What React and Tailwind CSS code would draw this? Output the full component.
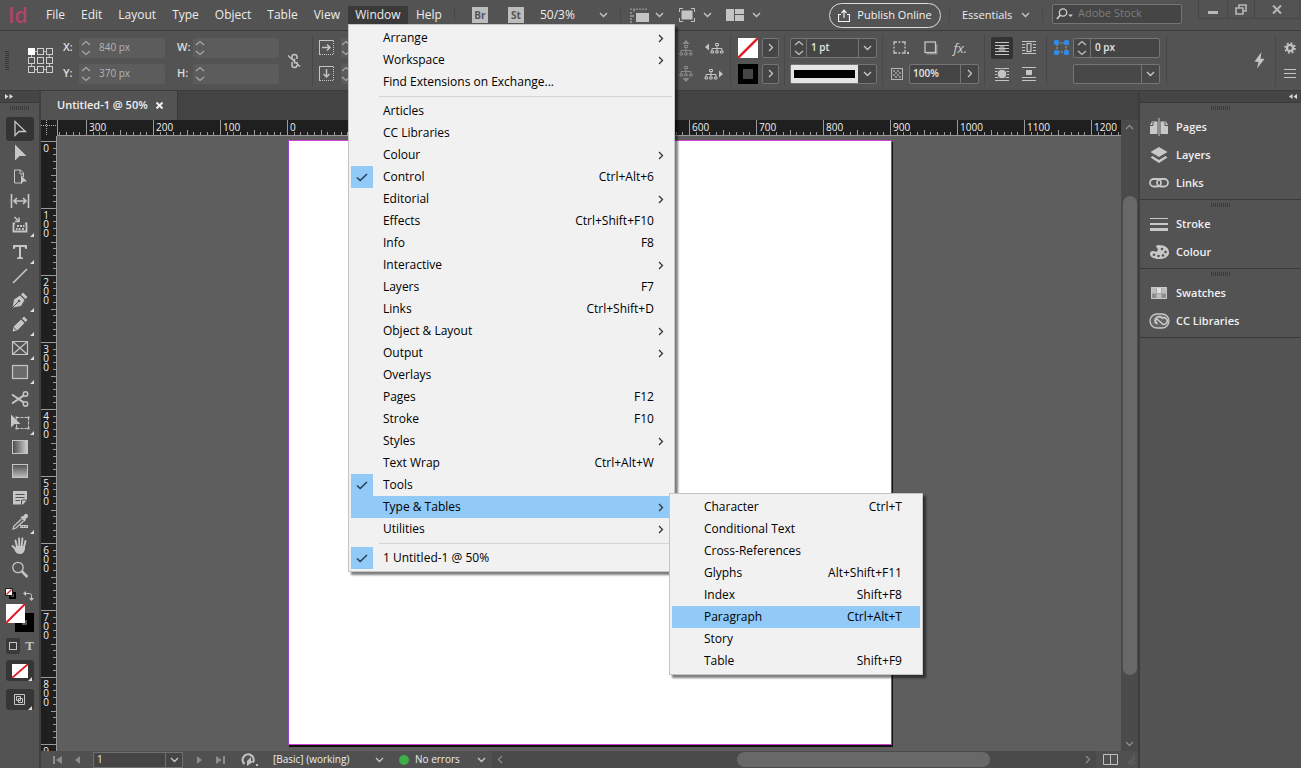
import React from "react";

const UI = "font-['Open_Sans','Noto_Sans',sans-serif]";

function Svg({ w, h, label, children, className = "" }) {
  return (
    <svg
      width={w}
      height={h}
      viewBox={`0 0 ${w} ${h}`}
      fill="none"
      stroke="currentColor"
      aria-hidden={label ? undefined : true}
      aria-label={label}
      className={`shrink-0 ${className}`}
    >
      {children}
    </svg>
  );
}

const Down = ({ className = "text-[#c8c8c8]" }) => (
  <Svg w={9} h={6} className={className}>
    <path d="M1 1l3.5 3.5L8 1" strokeWidth="1.3" />
  </Svg>
);
const Right = ({ className = "text-[#c8c8c8]" }) => (
  <Svg w={6} h={9} className={className}>
    <path d="M1 1l3.5 3.5L1 8" strokeWidth="1.3" />
  </Svg>
);
const Spin = ({ className = "text-[#a8a8a8]" }) => (
  <Svg w={10} h={16} className={className}>
    <path d="M1 5l4-3.5L9 5M1 11l4 3.500L9 11" strokeWidth="1.2" />
  </Svg>
);
const Divider = ({ className = "" }) => (
  <span className={`w-px shrink-0 self-stretch bg-[#484848] ${className}`} />
);
const Grip = ({ vertical = false }) =>
  vertical ? (
    <Svg w={4} h={20}>
      <path d="M2 0v20" stroke="#383838" strokeWidth="4" strokeDasharray="1 1" />
    </Svg>
  ) : (
    <Svg w={20} h={4}>
      <path d="M0 2h20" stroke="#3a3a3a" strokeWidth="4" strokeDasharray="1 1" />
    </Svg>
  );

/* ---------- menus ---------- */

const windowMenu = [
  { t: "Arrange", sub: true },
  { t: "Workspace", sub: true },
  { t: "Find Extensions on Exchange..." },
  null,
  { t: "Articles" },
  { t: "CC Libraries" },
  { t: "Colour", sub: true },
  { t: "Control", k: "Ctrl+Alt+6", on: true },
  { t: "Editorial", sub: true },
  { t: "Effects", k: "Ctrl+Shift+F10" },
  { t: "Info", k: "F8" },
  { t: "Interactive", sub: true },
  { t: "Layers", k: "F7" },
  { t: "Links", k: "Ctrl+Shift+D" },
  { t: "Object & Layout", sub: true },
  { t: "Output", sub: true },
  { t: "Overlays" },
  { t: "Pages", k: "F12" },
  { t: "Stroke", k: "F10" },
  { t: "Styles", sub: true },
  { t: "Text Wrap", k: "Ctrl+Alt+W" },
  { t: "Tools", on: true },
  {
    t: "Type & Tables",
    sub: true,
    hot: true,
    items: [
      { t: "Character", k: "Ctrl+T" },
      { t: "Conditional Text" },
      { t: "Cross-References" },
      { t: "Glyphs", k: "Alt+Shift+F11" },
      { t: "Index", k: "Shift+F8" },
      { t: "Paragraph", k: "Ctrl+Alt+T", hot: true },
      { t: "Story" },
      { t: "Table", k: "Shift+F9" },
    ],
  },
  { t: "Utilities", sub: true },
  null,
  { t: "1 Untitled-1 @ 50%", on: true },
];

function Menu({ items, className }) {
  return (
    <div
      role="menu"
      className={`absolute z-20 border border-[#c4c4c4] bg-[#f1f1f1] p-[2px] text-[12px] text-black shadow-[3px_3px_2px_rgba(0,0,0,0.5)] ${className}`}
    >
      {items.map((it, i) =>
        it === null ? (
          <div key={i} role="separator" className="my-[3px] ml-7 h-px bg-[#d4d4d4]" />
        ) : (
          <div key={i} className="relative">
            <button
              role="menuitem"
              className={`flex h-[22px] w-full items-center text-left ${it.hot ? "bg-[#91c9f7]" : ""}`}
            >
              <span
                className={`mr-[10px] flex h-[22px] w-[22px] items-center justify-center ${it.on ? "bg-[#91c9f7]" : ""}`}
              >
                {it.on && (
                  <Svg w={12} h={9} className="text-[#223a52]">
                    <path d="M1 4.500l3.200 3L11 1" strokeWidth="1.4" />
                  </Svg>
                )}
              </span>
              <span className="flex-1">{it.t}</span>
              {it.k && <span className="mr-[18px]">{it.k}</span>}
              {it.sub && <Right className="mr-[8px] text-[#333]" />}
            </button>
            {it.items && <Menu items={it.items} className="-top-[3px] left-full -ml-[3px] w-[254px]" />}
          </div>
        )
      )}
    </div>
  );
}

function MenuBar() {
  const left = ["File", "Edit", "Layout", "Type", "Object", "Table", "View"];
  return (
    <header className="flex h-[30px] shrink-0 items-center text-[12px] text-[#ececec]">
      <span className="w-[38px] shrink-0 pl-2 text-[21px] leading-none font-semibold text-[#b5446d]">Id</span>
      <nav className="flex shrink-0 items-center">
        {left.map((t) => (
          <button key={t} className="h-[18px] px-2 leading-[18px]">
            {t}
          </button>
        ))}
        <div className="relative">
          <button className="mt-[6px] mb-[6px] block h-[18px] w-[60px] bg-[#3a3a3a] text-center leading-[18px]">
            Window
          </button>
          <Menu items={windowMenu} className="top-[24px] left-0 w-[327px]" />
        </div>
        <button className="h-[18px] px-2 leading-[18px]">Help</button>
      </nav>
      <Divider className="mr-[17px] ml-1 my-2" />
      <button className="h-4 w-4 shrink-0 bg-[#bdbdbd] text-[10px] leading-4 font-bold text-[#555]">Br</button>
      <button className="ml-5 h-4 w-4 shrink-0 bg-[#bdbdbd] text-[10px] leading-4 font-bold text-[#555]">St</button>
      <button className="ml-4 flex w-[68px] shrink-0 items-center justify-between">
        50/3% <Down />
      </button>
      <Divider className="ml-3 mr-[9px] my-2" />
      <button aria-label="View options" className="flex shrink-0 items-center gap-[6px] text-[#c4c4c4]">
        <Svg w={19} h={15}>
          <path d="M1 .500v1.500M4 .500v3M7 .500v1.500M10 .500v1.500M13 .500v1.500M16 .500v1.500M0 5h2M0 8h4M0 11h2M0 14h2" />
          <rect x="6" y="5" width="13" height="9" fill="currentColor" stroke="none" />
        </Svg>
        <Down />
      </button>
      <button aria-label="Screen mode" className="ml-[15px] flex shrink-0 items-center gap-2 text-[#c4c4c4]">
        <Svg w={16} h={14}>
          <path d="M.500 4V.500H4M12 .500h3.500V4M15.500 10v3.500H12M4 13.500H.500V10" />
          <rect x="2.500" y="2.500" width="11" height="9" fill="currentColor" stroke="none" />
        </Svg>
        <Down />
      </button>
      <button aria-label="Arrange documents" className="ml-[14px] flex shrink-0 items-center gap-2 text-[#c4c4c4]">
        <Svg w={18} h={12}>
          <path d="M0 0h8v12H0zM9 0h9v5H9zM9 6h9v6H9z" fill="currentColor" stroke="none" />
        </Svg>
        <Down />
      </button>
      <span className="flex-1" />
      <button className="flex h-[25px] w-[112px] shrink-0 items-center justify-center gap-[7px] rounded-full border border-[#dcdcdc] text-[#f2f2f2]">
        <Svg w={12} h={13}>
          <path d="M3 5.500H.500v7h11v-7H9M6 9V1.500M3.500 4L6 1.200 8.500 4" strokeWidth="1.2" />
        </Svg>
        <span className="text-[11px] font-medium">Publish Online</span>
      </button>
      <Divider className="ml-2 mr-3 my-2" />
      <button className="flex w-[68px] shrink-0 items-center justify-between text-[11px]">
        Essentials <Down />
      </button>
      <Divider className="ml-3 mr-[9px] my-2" />
      <label className="mb-[3px] flex h-5 w-[130px] shrink-0 items-center gap-1 rounded-[2px] border border-[#757575] bg-[#454545] px-[3px]">
        <Svg w={18} h={12} className="text-[#cfcfcf]">
          <circle cx="7" cy="4.500" r="3.700" strokeWidth="1.3" />
          <path d="M4.300 7.200L.800 11" strokeWidth="1.7" />
          <path d="M12 6.500h5L14.500 9z" fill="currentColor" stroke="none" />
        </Svg>
        <input
          aria-label="Search Adobe Stock"
          placeholder="Adobe Stock"
          className="min-w-0 flex-1 bg-transparent text-[11px] outline-none placeholder:text-[#7d7d7d]"
        />
      </label>
      <div className="ml-4 mr-px flex h-[19px] shrink-0 self-start border-x border-b border-[#484848] text-[#b8b8b8]">
        <button aria-label="Minimise" className="flex w-7 items-end justify-center pb-1">
          <span className="h-[3px] w-[10px] bg-current" />
        </button>
        <button aria-label="Restore" className="flex w-7 items-center justify-center border-x border-[#484848]">
          <Svg w={12} h={11}>
            <path d="M4 4V1h7v6H8M1 4h7v6H1z" strokeWidth="1.6" />
          </Svg>
        </button>
        <button aria-label="Close" className="flex w-11 items-center justify-center">
          <Svg w={10} h={9}>
            <path d="M1 .500l8 8M9 .500l-8 8" strokeWidth="2" />
          </Svg>
        </button>
      </div>
    </header>
  );
}

/* ---------- control bar ---------- */

function SoftField({ label, value, id }) {
  return (
    <div className="flex h-5 items-center">
      <label htmlFor={id} className="w-4 text-[11px] font-semibold text-[#dedede]">
        {label}
      </label>
      <div className="flex h-5 w-[86px] items-center rounded-[2px] bg-[#5c5c5c] pl-[2px]">
        <Spin />
        <input
          id={id}
          defaultValue={value}
          className="ml-2 min-w-0 flex-1 bg-transparent text-[10px] text-[#b4b4b4] outline-none"
        />
      </div>
    </div>
  );
}

const Pair = ({ children, className = "" }) => (
  <div className={`grid shrink-0 grid-rows-[20px_20px] items-center gap-y-[6px] ${className}`}>{children}</div>
);

const IconBtn = ({ label, children, className = "" }) => (
  <button aria-label={label} className={`flex items-center justify-center text-[#c4c4c4] ${className}`}>
    {children}
  </button>
);

const Tree = ({ dir }) => (
  <Svg w={20} h={16} className={dir === "up" || dir === "down" ? "text-[#8b8b8b]" : ""}>
    {dir === "up" && <path d="M10 0l3.500 4h-7z" fill="currentColor" stroke="none" />}
    {dir === "down" && <path d="M10 16l3.500-4h-7z" fill="currentColor" stroke="none" />}
    {dir === "left" && <path d="M1 7l4-3.500v7z" fill="currentColor" stroke="none" />}
    {dir === "right" && <path d="M19 8l-4-3.500v7z" fill="currentColor" stroke="none" />}
    <g transform={dir === "up" ? "translate(3 4)" : dir === "down" ? "translate(3 -1)" : dir === "left" ? "translate(6 2)" : "translate(0 2)"}>
      <path d="M5.500 1.500h3v2h-3zM7 4v3M2 9V6.500h10V9M1 9h2.500v2H1zM5.700 9h2.500v2H5.700zM10.500 9H13v2h-2.500zM7 6v3" />
    </g>
  </Svg>
);

const Wrap = ({ kind }) => (
  <Svg w={16} h={14}>
    {kind === "none" && (
      <>
        <path d="M1 1.500h14M1 4.500h14M1 7.500h14M1 10.500h14M1 13.500h14" />
        <path d="M4.500 10.500a3.500 6.500 0 017 0z" fill="currentColor" fillOpacity="0.6" stroke="none" />
      </>
    )}
    {kind === "box" && (
      <>
        <path d="M1 .500h14M1 3.500h3M1 6.500h3M1 9.500h3M12 3.500h3M12 6.500h3M12 9.500h3M1 12.500h14" />
        <rect x="6" y="2.500" width="4" height="8" strokeWidth="1.200" />
      </>
    )}
    {kind === "shape" && (
      <>
        <path d="M1 1.500h14M1 4.500h14M1 7.500h14M1 10.500h14M1 13.500h14" />
        <circle cx="8" cy="7" r="4.800" fill="currentColor" stroke="#535353" />
      </>
    )}
    {kind === "jump" && (
      <>
        <path d="M1 .500h14M1 10.500h14M1 13.500h14" />
        <rect x="5" y="3" width="6" height="5" fill="currentColor" stroke="none" />
      </>
    )}
  </Svg>
);

function NoneSwatch({ className }) {
  return (
    <svg viewBox="0 0 20 20" preserveAspectRatio="none" aria-hidden="true" className={className}>
      <rect width="20" height="20" fill="#fff" />
      <path d="M0 20L20 0" stroke="#e01b24" strokeWidth="2.400" />
    </svg>
  );
}

const arrowBox =
  "flex items-center justify-center rounded-[2px] border border-[#757575] bg-[#454545]";

function ControlBar() {
  const cells = [];
  for (let r = 0; r < 3; r++)
    for (let c = 0; c < 3; c++)
      cells.push(
        <rect
          key={`${r}${c}`}
          x={0.5 + c * 9}
          y={0.5 + r * 9}
          width="6"
          height="6"
          fill={r + c === 0 ? "#fff" : "#535353"}
          stroke={r + c === 0 ? "#fff" : "#cfcfcf"}
        />
      );
  return (
    <section
      aria-label="Control"
      className="flex h-[61px] shrink-0 items-center border-y border-[#3c3c3c] text-[11px] text-[#e6e6e6]"
    >
      <span className="ml-[5px]">
        <Grip vertical />
      </span>
      <Svg w={26} h={25} className="ml-[19px]">
        <path d="M3.500 3.500h18v18h-18z" stroke="#bdbdbd" />
        {cells}
      </Svg>
      <Pair className="ml-[9px]">
        <SoftField id="x" label="X:" value="840 px" />
        <SoftField id="y" label="Y:" value="370 px" />
      </Pair>
      <Pair className="ml-[12px]">
        <SoftField id="w" label="W:" value="" />
        <SoftField id="h" label="H:" value="" />
      </Pair>
      <IconBtn label="Constrain proportions" className="ml-2 shrink-0">
        <Svg w={14} h={16}>
          <path d="M5 7V4a2.500 2.500 0 015 0v2M5 9v3a2.500 2.500 0 005 0v-3M7.500 5.500v5M1 2.500l12 11" strokeWidth="1.500" />
        </Svg>
      </IconBtn>
      <Divider className="ml-[11px] my-1" />
      <Pair className="ml-[6px]">
        <IconBtn label="Scale X">
          <Svg w={15} h={15}>
            <path d="M1 14.500h13.500V1" strokeDasharray="1 1" />
            <path d="M0 .500h14.500M.500 0v15" />
            <path d="M3 7.500h8M8 4.500l3 3-3 3" strokeWidth="1.500" />
          </Svg>
        </IconBtn>
        <IconBtn label="Scale Y">
          <Svg w={15} h={15}>
            <path d="M1 14.500h13.500V1" strokeDasharray="1 1" />
            <path d="M0 .500h14.500M.500 0v15" />
            <path d="M7.500 3v8M4.500 8l3 3 3-3" strokeWidth="1.500" />
          </Svg>
        </IconBtn>
      </Pair>
      <Pair className="ml-[7px] w-[86px] grid-cols-1">
        <div className="flex h-5 items-center rounded-[2px] bg-[#5c5c5c]">
          <Spin />
        </div>
        <div className="flex h-5 items-center rounded-[2px] bg-[#5c5c5c]">
          <Spin />
        </div>
      </Pair>
      <Divider className="ml-[247px] my-1" />
      <Pair className="ml-px grid-cols-[20px_20px] gap-x-[8px]">
        <IconBtn label="Select container">
          <Tree dir="up" />
        </IconBtn>
        <IconBtn label="Previous object">
          <Tree dir="left" />
        </IconBtn>
        <IconBtn label="Select content">
          <Tree dir="down" />
        </IconBtn>
        <IconBtn label="Next object">
          <Tree dir="right" />
        </IconBtn>
      </Pair>
      <Divider className="ml-[6px] my-1" />
      <Pair className="ml-[7px] grid-cols-[20px_17px] gap-x-1">
        <IconBtn label="Fill">
          <NoneSwatch className="h-5 w-5" />
        </IconBtn>
        <IconBtn label="Fill options" className={`${arrowBox} h-5`}>
          <Right />
        </IconBtn>
        <IconBtn label="Stroke" className="h-5 border-[5px] border-black bg-[#454545]" />
        <IconBtn label="Stroke options" className={`${arrowBox} h-5`}>
          <Right />
        </IconBtn>
      </Pair>
      <Divider className="ml-[5px] my-1" />
      <Pair className="ml-[5px] w-[87px] grid-cols-1">
        <div className="flex h-5 items-stretch rounded-[2px] border border-[#757575] bg-[#454545]">
          <span className="flex w-4 shrink-0 items-center justify-center border-r border-[#757575]">
            <Spin className="text-[#c4c4c4]" />
          </span>
          <input
            aria-label="Stroke weight"
            defaultValue="1 pt"
            className="min-w-0 flex-1 bg-transparent pl-1 text-[10px] font-semibold outline-none"
          />
          <button aria-label="Weights" className="flex w-[18px] shrink-0 items-center justify-center border-l border-[#757575]">
            <Down />
          </button>
        </div>
        <button
          aria-label="Stroke type"
          className="flex h-5 items-stretch rounded-[2px] border border-[#757575] bg-[#454545]"
        >
          <span className="flex flex-1 items-center bg-[#e4e4e4] px-[3px]">
            <span className="h-2 flex-1 bg-black" />
          </span>
          <span className="flex w-[18px] shrink-0 items-center justify-center">
            <Down />
          </span>
        </button>
      </Pair>
      <Divider className="ml-[5px] my-1" />
      <Pair className="ml-2 w-[88px] grid-cols-1">
        <div className="flex items-center justify-between pl-[2px] pr-3">
          <IconBtn label="Corner options">
            <Svg w={16} h={14}>
              <path d="M1 4V1h3M5.500 1h2M9 1h3v3M12 5.500v2M12 9v3H9M7.500 12h-2M4 12H1V9M1 7.500v-2" strokeWidth="1.300" />
              <rect x="14" y="11" width="2" height="2" fill="currentColor" stroke="none" />
            </Svg>
          </IconBtn>
          <IconBtn label="Drop shadow">
            <Svg w={14} h={14}>
              <path d="M2.500 12.500h10v-9" stroke="#8c8c8c" strokeWidth="2" />
              <rect x="1" y="1" width="10.500" height="10.500" fill="#535353" strokeWidth="1.300" />
            </Svg>
          </IconBtn>
          <button className="text-[13px] leading-5 font-medium text-[#cfcfcf] italic">fx.</button>
        </div>
        <div className="flex items-center justify-between">
          <Svg w={12} h={12} className="text-[#b4b4b4]">
            <rect x=".500" y=".500" width="11" height="11" />
            <path d="M2 2h2v2H2zM6 2h2v2H6zM4 4h2v2H4zM8 4h2v2H8zM2 6h2v2H2zM6 6h2v2H6zM4 8h2v2H4zM8 8h2v2H8z" fill="#8e8e8e" stroke="none" />
          </Svg>
          <div className="flex h-5 w-[70px] rounded-[2px] border border-[#757575] bg-[#454545]">
            <input
              aria-label="Opacity"
              defaultValue="100%"
              className="min-w-0 flex-1 bg-transparent pl-[3px] text-[10px] font-semibold outline-none"
            />
            <button aria-label="Opacity slider" className="flex w-[18px] shrink-0 items-center justify-center border-l border-[#757575]">
              <Right />
            </button>
          </div>
        </div>
      </Pair>
      <Divider className="ml-[5px] my-1" />
      <Pair className="ml-[6px] grid-cols-[22px_22px] gap-x-[5px]">
        <IconBtn label="No text wrap" className="h-[22px] rounded-[2px] bg-[#333]">
          <Wrap kind="none" />
        </IconBtn>
        <IconBtn label="Wrap around bounding box">
          <Wrap kind="box" />
        </IconBtn>
        <IconBtn label="Wrap around object shape">
          <Wrap kind="shape" />
        </IconBtn>
        <IconBtn label="Jump object">
          <Wrap kind="jump" />
        </IconBtn>
      </Pair>
      <Divider className="ml-[6px] my-1" />
      <Pair className="ml-[7px] grid-cols-[15px_87px] gap-x-[4px]">
        <Svg w={15} h={15}>
          <path d="M3 3h9v9H3z" stroke="#a0a0a0" strokeDasharray="2 1" />
          <g fill="#2f8ceb" stroke="none">
            <rect width="5" height="5" rx="1.500" />
            <rect x="10" width="5" height="5" rx="1.500" />
            <rect y="10" width="5" height="5" rx="1.500" />
            <rect x="10" y="10" width="5" height="5" rx="1.500" />
          </g>
        </Svg>
        <div className="flex h-5 rounded-[2px] border border-[#757575] bg-[#454545]">
          <span className="flex w-[17px] shrink-0 items-center justify-center border-r border-[#757575]">
            <Spin className="text-[#c4c4c4]" />
          </span>
          <input
            aria-label="Corner size"
            defaultValue="0 px"
            className="min-w-0 flex-1 bg-transparent pl-1 text-[10px] font-semibold outline-none"
          />
        </div>
        <span />
        <button
          aria-label="Corner shape"
          className="flex h-5 justify-end rounded-[2px] border border-[#757575] bg-[#484848]"
        >
          <span className="flex h-full w-[18px] items-center justify-center border-l border-[#757575]">
            <Down />
          </span>
        </button>
      </Pair>
      <Divider className="ml-[6px] my-1" />
      <span className="flex-1" />
      <IconBtn label="Quick apply" className="shrink-0">
        <Svg w={11} h={17}>
          <path d="M7.500 0L.500 9.500l4 .500L3 16.500 10.500 7l-4-.500z" fill="currentColor" stroke="none" />
        </Svg>
      </IconBtn>
      <Divider className="ml-[10px] my-1" />
      <Pair className="mr-[5px] ml-2">
        <IconBtn label="Settings">
          <Svg w={12} h={12}>
            <circle cx="6" cy="6" r="3" strokeWidth="2.200" />
            <circle cx="6" cy="6" r="4.900" strokeWidth="1.800" strokeDasharray="1.920 1.920" />
          </Svg>
        </IconBtn>
        <IconBtn label="Panel menu">
          <Svg w={12} h={9}>
            <path d="M0 .500h12M0 4.500h12M0 8.500h12" />
          </Svg>
        </IconBtn>
      </Pair>
    </section>
  );
}

/* ---------- tools ---------- */

const fillC = { fill: "currentColor", stroke: "none" };

const toolGroups = [
  [
    { n: "Selection", on: true, d: <path d="M5 2.500v14l4-4h6.500z" strokeWidth="1.300" /> },
    { n: "Direct selection", d: <path d="M5 1.500V17.500l4.500-4.500h7z" {...fillC} /> },
    {
      n: "Page",
      d: (
        <>
          <path d="M12 16H4.500V3h6l3 3v4M10 3v4h3.500" />
          <path d="M11 8v9l2.500-2.500H17z" {...fillC} />
        </>
      ),
    },
    { n: "Gap", d: <path d="M1.500 3v14M18.500 3v14M4 10h12M7 7l-3 3 3 3M13 7l3 3-3 3" strokeWidth="1.600" /> },
    {
      n: "Content collector",
      more: true,
      d: (
        <>
          <path d="M5 8.500H3.500v8h13v-8H15" strokeWidth="1.800" />
          <path d="M4.500 2l4 4M9 2.500v4H5" strokeWidth="1.500" />
          <path d="M7 10h2v2H7zM10 10h2v2h-2zM13 10h1.500v2H13zM6 13h1.500v2H6zM8.500 13h2v2h-2zM12 13h2v2h-2z" {...fillC} />
        </>
      ),
    },
  ],
  [
    { n: "Type", more: true, d: <path d="M3 3h14v4h-1.500l-1-2H11v10l2 .700V17H7v-1.300L9 15V5H5.500l-1 2H3z" {...fillC} /> },
    { n: "Line", d: <path d="M3 17L17 3" strokeWidth="1.600" /> },
    {
      n: "Pen",
      more: true,
      d: (
        <>
          <path d="M2.500 17.500l1.500-8L10 5.500l4.500 4.500-3.500 6z" {...fillC} />
          <path d="M11 4.700L13 2.500l4.500 4.500-2 2z" {...fillC} />
          <path d="M2.500 17.500l5.500-5.500" stroke="#535353" />
          <circle cx="9" cy="11" r="1.200" fill="#535353" stroke="none" />
        </>
      ),
    },
    {
      n: "Pencil",
      more: true,
      d: (
        <>
          <path d="M2.500 17.500l1.300-5L11 5.500l3.500 3.500-7 7.200zM12 4.500L14 2.500l3.500 3.500-2 2z" {...fillC} />
          <path d="M3.800 13.500l2.800 2.700" stroke="#535353" />
        </>
      ),
    },
    { n: "Rectangle frame", more: true, d: <path d="M2.500 3.500h15v13h-15zM2.500 3.500l15 13M17.500 3.500l-15 13" strokeWidth="1.200" /> },
    { n: "Rectangle", more: true, d: <rect x="2.500" y="3.500" width="15" height="13" fill="#6c6c6c" strokeWidth="1.200" /> },
  ],
  [
    {
      n: "Scissors",
      d: (
        <>
          <circle cx="15.500" cy="5" r="2.200" strokeWidth="1.500" />
          <circle cx="15.500" cy="15" r="2.200" strokeWidth="1.500" />
          <path d="M2 5.500l11.500 7.800M2 14.500l11.500-7.800" strokeWidth="2" />
        </>
      ),
    },
    {
      n: "Free transform",
      more: true,
      d: (
        <>
          <path d="M6.500 4.500h12v11h-12z" strokeDasharray="3 1" />
          <path d="M5.500 3.500h2v2h-2zM17.500 3.500h2v2h-2zM17.500 14.500h2v2h-2zM5.500 14.500h2v2h-2z" {...fillC} />
          <path d="M1 1.500v13L4.500 11h6z" {...fillC} />
        </>
      ),
    },
    { n: "Gradient swatch", d: <rect x="2.500" y="3.500" width="15" height="13" fill="url(#gradH)" /> },
    { n: "Gradient feather", d: <rect x="2.500" y="3.500" width="15" height="13" fill="url(#gradV)" /> },
  ],
  [
    {
      n: "Note",
      d: (
        <>
          <path d="M3 3h14v9l-4 4.500H3z" {...fillC} />
          <path d="M5.500 6.500h9M5.500 9.500h9M5.500 12.500h4.500M11.500 17v-5H17" stroke="#535353" />
        </>
      ),
    },
    {
      n: "Eyedropper",
      more: true,
      d: (
        <>
          <path d="M10.500 5.500l1.500-1.500 1 .500 1.500-2a2 2 0 013 3l-2 1.500.500 1-1.500 1.500z" {...fillC} />
          <path d="M11.500 7L4 14l-1 3 3-1 7.500-7" strokeWidth="1.300" />
          <path d="M10 14.500h8" strokeWidth="3" />
          <path d="M10.500 14.500h7" stroke="#535353" strokeDasharray="1 1.500" />
        </>
      ),
    },
    {
      n: "Hand",
      d: (
        <>
          <path d="M6 10h9v3q-1 5-5 5t-5.500-4z" {...fillC} />
          <path d="M7 11L5.500 4.500M9.300 10L9 2.500M11.700 10l.700-7.500M14 11l1.500-6M6 13.500L2.500 10" strokeWidth="1.900" strokeLinecap="round" />
        </>
      ),
    },
    {
      n: "Zoom",
      d: (
        <>
          <circle cx="8" cy="7.500" r="5.200" strokeWidth="1.300" />
          <path d="M12 11.500l5.500 5.500" strokeWidth="2.500" />
        </>
      ),
    },
  ],
];

const More = () => (
  <svg width="4" height="4" viewBox="0 0 4 4" aria-hidden="true" className="absolute right-[2px] bottom-0">
    <path d="M4 0v4H0z" fill="#dcdcdc" />
  </svg>
);

function Toolbar() {
  return (
    <aside aria-label="Tools" className="flex w-[41px] shrink-0 flex-col border-r-2 border-[#3f3f3f] text-[#c6c6c6]">
      <svg width="0" height="0" aria-hidden="true" className="absolute">
        <defs>
          <linearGradient id="gradH">
            <stop offset="0" stopColor="#4a4a4a" />
            <stop offset="1" stopColor="#d0d0d0" />
          </linearGradient>
          <linearGradient id="gradV" x1="0" y1="0" x2="0" y2="1">
            <stop offset="0" stopColor="#4f4f4f" />
            <stop offset="1" stopColor="#bdbdbd" />
          </linearGradient>
        </defs>
      </svg>
      <button aria-label="Expand" className="flex h-3 items-center border-b border-[#3a3a3a] bg-[#454545] pl-[5px] text-[#dcdcdc]">
        <Svg w={8} h={5}>
          <path d="M0 0l3.500 2.500L0 5zM4.500 0L8 2.500 4.500 5z" {...fillC} />
        </Svg>
      </button>
      <div className="flex justify-center pt-[3px] pb-[7px]">
        <Grip />
      </div>
      <div className="flex flex-col gap-[3px]">
        {toolGroups.map((g, i) => (
          <div key={i} className="flex flex-col items-center">
            {g.map((t) => (
              <button
                key={t.n}
                aria-label={t.n}
                className={`relative flex h-6 w-7 items-center justify-center rounded-[3px] ${t.on ? "bg-[#333]" : ""}`}
              >
                <svg width="20" height="20" viewBox="0 0 20 20" fill="none" stroke="currentColor" aria-hidden="true">
                  {t.d}
                </svg>
                {t.more && (
                  <svg width="4" height="4" viewBox="0 0 4 4" aria-hidden="true" className="absolute right-0 bottom-0">
                    <path d="M4 0v4H0z" fill="#dcdcdc" />
                  </svg>
                )}
              </button>
            ))}
          </div>
        ))}
      </div>
      <div className="flex items-center justify-between pt-1 pr-[5px] pl-[5px]">
        <IconBtn label="Default fill and stroke">
          <Svg w={12} h={12}>
            <rect x="5" y="5" width="5" height="5" stroke="#000" strokeWidth="2" />
            <rect x=".500" y=".500" width="7" height="7" fill="#fff" stroke="#222" />
            <path d="M1.500 6.500l5-5" stroke="#e01b24" strokeWidth="1.300" />
          </Svg>
        </IconBtn>
        <IconBtn label="Swap fill and stroke">
          <Svg w={11} h={11} className="mt-1">
            <path d="M2 3.500h4.500q2 0 2 2V9" />
            <path d="M0 3.500L3 1v5zM8.500 11L6 8h5z" {...fillC} />
          </Svg>
        </IconBtn>
      </div>
      <div className="flex pt-[3px] pl-[6px]">
        <Svg w={28} h={28} label="Fill and stroke">
          <rect x="12.500" y="12.500" width="12" height="12" stroke="#000" strokeWidth="7" fill="#535353" />
          <rect width="19" height="19" fill="#fff" stroke="none" />
          <path d="M0 19L19 0" stroke="#e01b24" strokeWidth="2" />
        </Svg>
      </div>
      <div className="flex items-center justify-between py-[6px] pr-[5px] pl-[6px]">
        <IconBtn label="Formatting affects container" className="h-4 w-[14px] rounded-[2px] bg-[#3a3a3a]">
          <Svg w={8} h={8}>
            <rect x=".500" y=".500" width="7" height="7" />
          </Svg>
        </IconBtn>
        <button aria-label="Formatting affects text" className="font-['Liberation_Serif',serif] text-[13px] leading-4 font-bold">
          T
        </button>
      </div>
      <div className="flex flex-col items-center gap-2">
        <button aria-label="Apply none" className="relative flex h-[21px] w-7 items-center justify-center rounded-[3px] bg-[#363636]">
          <NoneSwatch className="h-[14px] w-4" />
          <More />
        </button>
        <button aria-label="Screen mode" className="relative flex h-[21px] w-7 items-center justify-center rounded-[3px] bg-[#363636]">
          <Svg w={11} h={11}>
            <path d="M.500.500h10v10H.500zM2.500 2.500h4v4h-4zM4.500 4.500h4v4h-4z" />
          </Svg>
          <More />
        </button>
      </div>
    </aside>
  );
}

/* ---------- document ---------- */

const hTicks = [300, 200, 100, 0, 100, 200, 300, 400, 500, 600, 700, 800, 900, 1000, 1100, 1200];
const vTicks = [0, 100, 200, 300, 400, 500, 600, 700, 800, 900];
const minor = [1, 2, 3, 4, 5, 6, 7, 8, 9];

const HMinor = () => (
  <svg width="67" height="15" viewBox="0 0 67 15" aria-hidden="true" className="absolute right-0 bottom-0">
    {minor.map((i) => (
      <rect key={i} x={Math.round(i * 6.7)} y={i === 5 ? 10 : 12} width="1" height="5" fill="#9a9a9a" />
    ))}
  </svg>
);
const VMinor = () => (
  <svg width="15" height="67" viewBox="0 0 15 67" aria-hidden="true" className="absolute right-0 bottom-0">
    {minor.map((i) => (
      <rect key={i} y={Math.round(i * 6.7)} x={i === 5 ? 10 : 12} height="1" width="5" fill="#9a9a9a" />
    ))}
  </svg>
);

function Document() {
  return (
    <main className="flex min-w-0 flex-1 flex-col">
      <div className="flex h-[29px] shrink-0 bg-[#434343]">
        <div className="flex w-[137px] items-center gap-2 border-r border-[#3a3a3a] bg-[#535353] pl-4 text-[11px] text-[#f0f0f0]">
          <button className="font-semibold whitespace-nowrap">Untitled-1 @ 50%</button>
          <button aria-label="Close tab">
            <Svg w={7} h={7}>
              <path d="M.500.500l6 6M6.500.500l-6 6" strokeWidth="2" />
            </Svg>
          </button>
        </div>
      </div>
      <div className="flex min-h-0 flex-1">
        <div className="flex min-w-0 flex-1 flex-col">
          <div className="flex h-4 shrink-0 overflow-hidden bg-[#1f1f1f] text-[10px] leading-[14px] text-[#f0f0f0]">
            <div className="w-4 shrink-0 text-[#b0b0b0]">
              <Svg w={16} h={16}>
                <path d="M5.500 0v16M0 5.500h16" strokeDasharray="1 1" />
              </Svg>
            </div>
            <div className="relative w-[29px] shrink-0 overflow-hidden border-b border-l border-[#9a9a9a]">
              <HMinor />
            </div>
            {hTicks.map((t, i) => (
              <div key={i} className="relative w-[67px] shrink-0 border-b border-l border-[#9a9a9a] pl-[2px]">
                {t}
                <HMinor />
              </div>
            ))}
          </div>
          <div className="flex min-h-0 flex-1">
            <div className="flex w-4 shrink-0 flex-col overflow-hidden bg-[#1f1f1f] text-[10px] leading-[9px] text-[#f0f0f0]">
              <div className="h-[5px] shrink-0 border-r border-[#9a9a9a]" />
              {vTicks.map((t) => (
                <div key={t} className="relative h-[67px] shrink-0 border-t border-r border-[#9a9a9a] pt-[2px]">
                  <span className="block w-[10px] text-center break-all">{t}</span>
                  <VMinor />
                </div>
              ))}
            </div>
            <div className="flex-1 overflow-hidden bg-[#5e5e5e] pt-[4px] pl-[231px]">
              <div className="h-[605px] w-[604px] border border-x-[#9440cc] border-y-[#cc40cc] bg-white shadow-[1px_2px_0_#111]" />
            </div>
          </div>
        </div>
        <div className="flex w-[17px] shrink-0 flex-col items-center justify-between bg-[#4a4a4a] py-1">
          <Down className="rotate-180 text-[#8a8a8a]" />
          <div className="mt-[66px] w-[14px] flex-1 rounded-full bg-[#686868]" />
          <Down className="mt-[66px] text-[#8a8a8a]" />
        </div>
      </div>
      <StatusBar />
    </main>
  );
}

function StatusBar() {
  const nav = "flex items-center text-[#8c8c8c]";
  return (
    <footer className="flex h-[17px] shrink-0 items-center bg-[#505050] text-[10px] text-[#ececec]">
      <button aria-label="First page" className={`${nav} ml-3`}>
        <Svg w={9} h={8}>
          <path d="M0 0h2v8H0zM9 0v8L3 4z" {...fillC} />
        </Svg>
      </button>
      <button aria-label="Previous page" className={`${nav} ml-[13px]`}>
        <Svg w={5} h={8}>
          <path d="M5 0v8L0 4z" {...fillC} />
        </Svg>
      </button>
      <div className="ml-[13px] flex h-4 w-[90px] shrink-0 border border-[#707070] bg-[#454545]">
        <input aria-label="Page" defaultValue="1" className="min-w-0 flex-1 bg-transparent pl-[3px] outline-none" />
        <button aria-label="Choose page" className="flex w-[17px] items-center justify-center border-l border-[#707070]">
          <Down />
        </button>
      </div>
      <button aria-label="Next page" className={`${nav} ml-[14px]`}>
        <Svg w={5} h={8}>
          <path d="M0 0v8l5-4z" {...fillC} />
        </Svg>
      </button>
      <button aria-label="Last page" className={`${nav} ml-[14px]`}>
        <Svg w={9} h={8}>
          <path d="M7 0h2v8H7zM0 0v8l6-4z" {...fillC} />
        </Svg>
      </button>
      <button aria-label="Preflight" className="ml-4 text-[#c0c0c0]">
        <Svg w={18} h={14}>
          <path d="M3.500 11A5.500 5.500 0 1112 9.500" strokeWidth="2.200" />
          <path d="M6 13V8l4-4v4h3z" {...fillC} />
          <rect x="15" y="11" width="2" height="2" {...fillC} />
        </Svg>
      </button>
      <button className="ml-[14px] flex w-[111px] shrink-0 items-center justify-between">
        [Basic] (working) <Down />
      </button>
      <span className="ml-[15px] h-[10px] w-[10px] shrink-0 rounded-full bg-[#3fae49]" />
      <button className="ml-[6px] flex w-[71px] shrink-0 items-center justify-between">
        No errors <Down />
      </button>
      <div className="ml-[6px] flex h-full flex-1 items-center bg-[#4a4a4a] pl-[5px]">
        <Right className="rotate-180 text-[#8a8a8a]" />
        <div className="ml-[39%] h-[15px] w-[253px] rounded-full bg-[#686868]" />
        <Right className="mr-[5px] ml-auto text-[#8a8a8a]" />
      </div>
      <button aria-label="Split view" className="ml-[7px] text-[#c0c0c0]">
        <Svg w={15} h={11}>
          <path d="M.500.500h14v10H.500zM7.500 0v11" />
        </Svg>
      </button>
      <Svg w={10} h={10} className="mr-[2px] ml-2 text-[#6e6e6e]">
        <path d="M8 0v10M5.500 3v7M3 6v4" strokeDasharray="1 1" strokeWidth="1.500" />
      </Svg>
    </footer>
  );
}

/* ---------- panels ---------- */

const panelIcons = {
  Pages: (
    <Svg w={18} h={18}>
      <path d="M0 7l2-3.500h5.500V16H0zM18 7l-2-3.500h-5.500V16H18z" {...fillC} />
      <path d="M9 0v18" />
      <path d="M0 7.500h3V4M18 7.500h-3V4" stroke="#535353" />
    </Svg>
  ),
  Layers: (
    <Svg w={18} h={18}>
      <path d="M9 1l8.500 5L9 11 .500 6zM.500 11.500l2-1.500L9 14l6.500-4 2 1.500L9 17z" {...fillC} />
    </Svg>
  ),
  Links: (
    <Svg w={20} h={10}>
      <rect x="1" y="1" width="11" height="7.500" rx="3.700" strokeWidth="1.800" />
      <rect x="8" y="1" width="11" height="7.500" rx="3.700" strokeWidth="1.800" />
    </Svg>
  ),
  Stroke: (
    <Svg w={18} h={13}>
      <path d="M0 .500h18" />
      <path d="M0 6h18" strokeWidth="2" />
      <path d="M0 11.500h18" strokeWidth="3" />
    </Svg>
  ),
  Colour: (
    <Svg w={19} h={15}>
      <path d="M8 0c8 0 11 3.500 11 7.500S15 14 9 14 0 11.500 0 9s2-3.500 5-2.500S8.500 4 7 3 6 0 8 0z" {...fillC} />
      <g fill="#535353" stroke="none">
        <circle cx="12" cy="4" r="1.300" />
        <circle cx="15.500" cy="7" r="1.300" />
        <circle cx="13" cy="10.500" r="1.300" />
        <circle cx="8.500" cy="11" r="1.300" />
        <circle cx="4" cy="9.800" r="1.300" />
      </g>
    </Svg>
  ),
  Swatches: (
    <Svg w={16} h={12}>
      <rect width="16" height="12" fill="#8e8e8e" stroke="none" />
      <path d="M0 0h5v6H0zM11 0h5v6h-5zM6 7h4v5H6z" fill="#bdbdbd" stroke="none" />
      <path d="M6 0h4v6H6z" fill="#e0e0e0" stroke="none" />
      <path d="M5.500 0v12M10.500 0v12M0 6.500h16" stroke="#a6a6a6" />
      <path d="M.500.500h15v11H.500z" stroke="#c8c8c8" />
    </Svg>
  ),
  "CC Libraries": (
    <Svg w={21} h={16}>
      <rect x="1" y="1" width="19" height="14" rx="7" fill="#636363" strokeWidth="1.300" />
      <path d="M14 5.500a4 4 0 10-5.500 5.500M7 10.500a4 4 0 016-5.500M8 6l5 4.500a3.200 3.200 0 100-5" strokeWidth="1.600" />
    </Svg>
  ),
};

const panelGroups = [["Pages", "Layers", "Links"], ["Stroke", "Colour"], ["Swatches", "CC Libraries"]];

function Panels() {
  return (
    <aside aria-label="Panels" className="flex w-[163px] shrink-0 flex-col border-l-2 border-[#3d3d3d]">
      <button aria-label="Collapse panels" className="flex h-3 shrink-0 items-center justify-end border-b border-[#3a3a3a] bg-[#454545] pr-1 text-[#dcdcdc]">
        <Svg w={8} h={5}>
          <path d="M3.500 0v5L0 2.500zM8 0v5L4.500 2.500z" {...fillC} />
        </Svg>
      </button>
      {panelGroups.map((g) => (
        <div key={g[0]} className="border-b border-[#3a3a3a] pb-[2px]">
          <div className="flex h-[10px] items-center justify-center">
            <Grip />
          </div>
          {g.map((p) => (
            <button key={p} className="flex h-7 w-full items-center gap-[6px] pl-2 text-[11px] text-[#f0f0f0]">
              <span className="flex w-[22px] justify-center text-[#c8c8c8]">{panelIcons[p]}</span>
              <span className="font-semibold">{p}</span>
            </button>
          ))}
        </div>
      ))}
    </aside>
  );
}

export default function App() {
  return (
    <div className={`${UI} flex h-screen flex-col overflow-hidden bg-[#535353]`}>
      <MenuBar />
      <ControlBar />
      <div className="flex min-h-0 flex-1">
        <Toolbar />
        <Document />
        <Panels />
      </div>
    </div>
  );
}
